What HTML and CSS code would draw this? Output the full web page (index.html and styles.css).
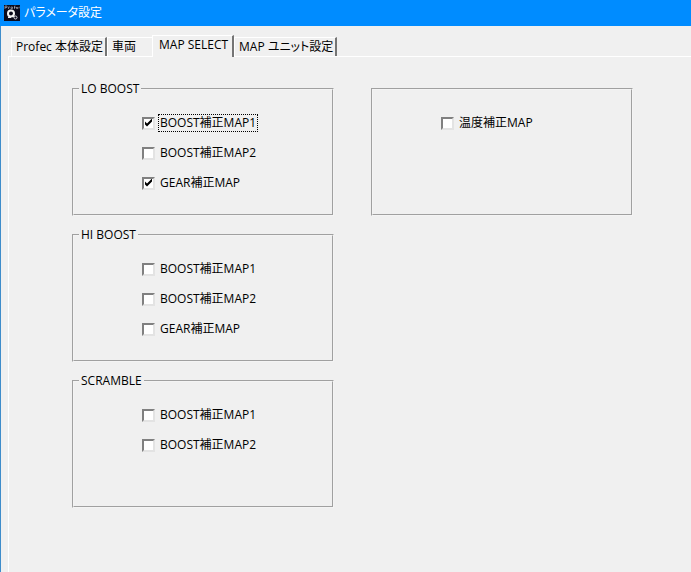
FILE: index.html
```
<!DOCTYPE html>
<html lang="ja">
<head>
    <meta charset="UTF-8">
    <meta name="viewport" content="width=device-width, initial-scale=1.0">
    <title>パラメータ設定</title>
    <link rel="stylesheet" href="styles.css">
</head>
<body>
    <header class="title-bar">
        <svg class="app-icon" viewBox="0 0 16 16" aria-hidden="true">
            <rect width="16" height="16" fill="#0b0b1c"/>
            <path d="M1 4V1h2v1.500H1M4.500 4V2H6M7 2h1.500v1.500H7zM10.500 4V1h1M10 2.500h1.500M12.500 2.500h1.500M12.500 2v1.500H14M15.500 2H15v1.500" fill="none" stroke="#b9bcc8" stroke-width=".6"/>
            <circle cx="7" cy="8.500" r="3" fill="none" stroke="#f4f4f4" stroke-width="2"/>
            <circle cx="11.500" cy="12.500" r="1.500" fill="none" stroke="#d8d8e0"/>
            <path d="M8 10l2 2M4 12.500h3" stroke="#f4f4f4" stroke-width="1.200"/>
        </svg>
        <h1>パラメータ設定</h1>
    </header>

    <main class="window-body">
        <div class="tabs" role="tablist">
            <button type="button" class="tab" role="tab">Profec 本体設定</button>
            <button type="button" class="tab tab-before" role="tab">車両</button>
            <button type="button" class="tab active" role="tab" aria-selected="true">MAP SELECT</button>
            <button type="button" class="tab" role="tab">MAP ユニット設定</button>
        </div>

        <form class="panel">
            <div class="column">
                <fieldset class="group">
                    <legend>LO BOOST</legend>
                    <label class="option focused"><input type="checkbox" checked><span>BOOST補正MAP1</span></label>
                    <label class="option"><input type="checkbox"><span>BOOST補正MAP2</span></label>
                    <label class="option"><input type="checkbox" checked><span>GEAR補正MAP</span></label>
                </fieldset>

                <fieldset class="group">
                    <legend>HI BOOST</legend>
                    <label class="option"><input type="checkbox"><span>BOOST補正MAP1</span></label>
                    <label class="option"><input type="checkbox"><span>BOOST補正MAP2</span></label>
                    <label class="option"><input type="checkbox"><span>GEAR補正MAP</span></label>
                </fieldset>

                <fieldset class="group">
                    <legend>SCRAMBLE</legend>
                    <label class="option"><input type="checkbox"><span>BOOST補正MAP1</span></label>
                    <label class="option"><input type="checkbox"><span>BOOST補正MAP2</span></label>
                </fieldset>
            </div>

            <div class="column">
                <fieldset class="group">
                    <legend class="blank"></legend>
                    <label class="option"><input type="checkbox"><span>温度補正MAP</span></label>
                </fieldset>
            </div>
        </form>
    </main>
</body>
</html>
```
FILE: styles.css
```
/* Global styling */
* { box-sizing: border-box; margin: 0; padding: 0; }
body {
    display: flex; flex-direction: column; min-height: 100vh;
    background: #f0f0f0; color: #000;
    font-family: "Open Sans", "Noto Sans CJK JP", sans-serif; font-size: 12px; line-height: 16px;
    font-feature-settings: "palt";
}
button, input { font: inherit; color: inherit; font-feature-settings: inherit; }

/* Title bar */
.title-bar { display: flex; align-items: center; gap: 4px; height: 26px; padding: 0 4px; background: #008cff; color: #fff; }
.title-bar h1 { font-size: 12px; font-weight: normal; }
.app-icon { width: 16px; height: 16px; }

/* Window and tabs */
.window-body { flex: 1; display: flex; flex-direction: column; padding: 9px 0 0 7px; border-left: 1px solid #3f8dcb; }
.tabs { display: flex; align-items: flex-end; padding-left: 3px; }
.tab {
    height: 19px; padding: 0 2px 0 4px; background: #f0f0f0;
    border: 1px solid #fff; border-right: 2px solid #757575; border-bottom: 0;
}
.tab-before { padding-right: 16px; border-right: 0; }
.tab.active { height: 22px; margin-bottom: -1px; padding: 0 4px 4px 6px; z-index: 1; }

/* Tab panel */
.panel {
    flex: 1; display: grid; grid-template-columns: 1fr 1fr; gap: 37px;
    padding: 24px 58px 24px 63px; border: solid #fff; border-width: 1px 0 0 1px;
}
.column { display: flex; flex-direction: column; gap: 11px; }

/* Groups and check boxes */
.group { min-width: 0; height: 135px; padding: 11px 8px 0 7px; border: 2px groove #f4f4f4; }
.group legend { height: 16px; padding: 0 2px; margin-left: -2px; }
.group .blank { padding: 0; }
.option { display: flex; align-items: center; gap: 3px; height: 30px; margin-left: 61px; }
.option span { padding: 0 1px; border: 1px solid transparent; }
.focused span { border: 1px dotted #000; }
.option input {
    appearance: none; width: 13px; height: 13px; background: #fff;
    border: 2px solid; border-color: #808080 #e3e3e3 #e3e3e3 #808080;
}
.option input:checked::after {
    content: ""; display: block; width: 9px; height: 9px; background: #000;
    clip-path: polygon(1px 3px, 3px 5px, 8px 0, 8px 3px, 3px 8px, 1px 6px);
}
```
